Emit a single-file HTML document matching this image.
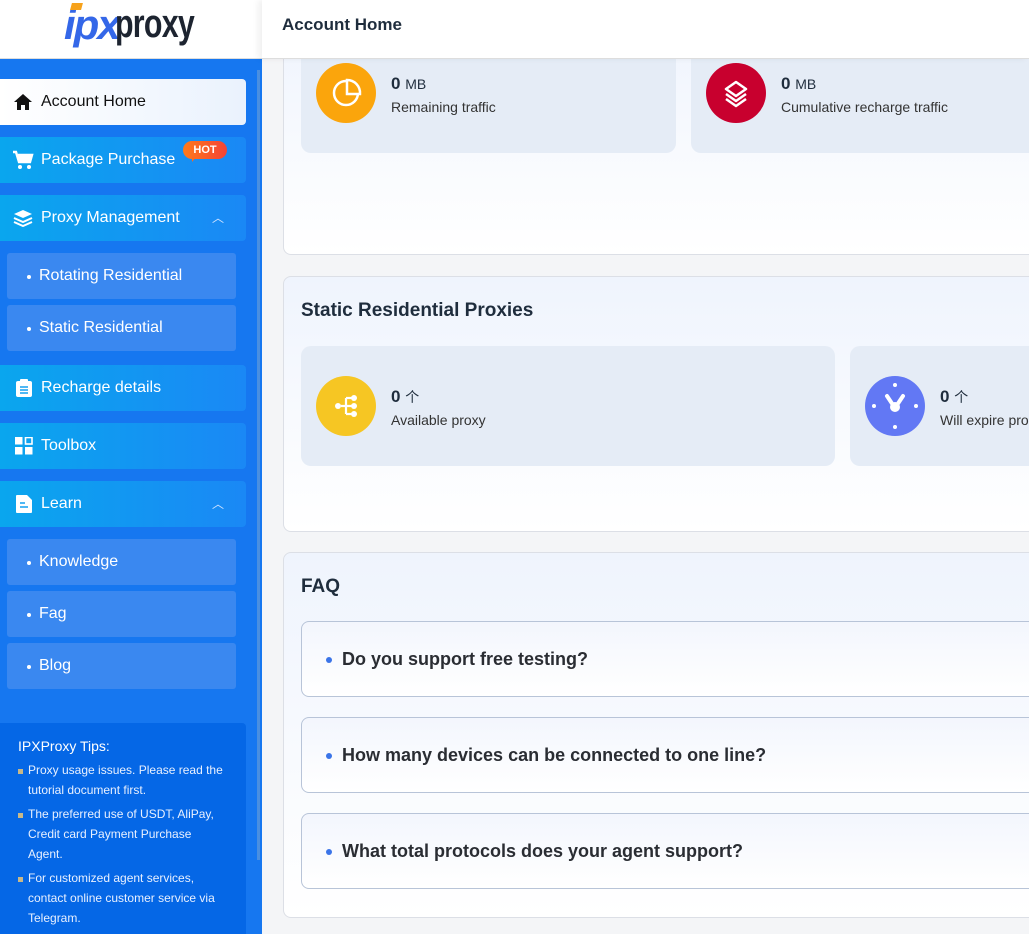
<!DOCTYPE html>
<html><head><meta charset="utf-8"><style>
*{box-sizing:border-box;margin:0;padding:0}
body{width:1029px;height:934px;overflow:hidden;background:#f4f5f7;font-family:"Liberation Sans",Arial,sans-serif;position:relative}
.abs{position:absolute}
#logo{left:0;top:0;width:262px;height:59px;background:#fff;border-bottom:1px solid #ddd;overflow:hidden}
#side{left:0;top:59px;width:262px;height:875px;background:#1677f0}
#sb{left:257px;top:70px;width:3px;height:790px;background:#4a8fe0}
.mi{position:absolute;left:0;width:246px;height:46px;border-radius:0 4px 4px 0;background:linear-gradient(90deg,#0aa6ee,#1a88f5);color:#fff;font-size:16px;line-height:46px;padding-left:41px}
.mi svg{position:absolute;left:13px;top:14px}
.sub{position:absolute;left:7px;width:229px;height:46px;border-radius:3px;background:#3a88f0;color:#fff;font-size:16px;line-height:46px;padding-left:20px}
.sub:before{content:"";position:absolute;left:20px;top:22px;width:4px;height:4px;border-radius:50%;background:#fff}
.sub span{margin-left:12px}
.car{position:absolute;right:22px;top:0;font-size:12px;color:#cfe3ff}
.card{position:absolute;left:283px;width:760px;border:1px solid #dcdfe6;border-radius:8px;background:linear-gradient(180deg,#eff4fd,#fff)}
.stat{position:absolute;background:#e5ecf6;border-radius:10px}
.ic{position:absolute;width:60px;height:60px;border-radius:50%}
.num{position:absolute;font-size:17px;font-weight:bold;color:#1f2d3d}
.num small{font-size:14px;font-weight:normal}
.lab{position:absolute;font-size:14px;color:#333;white-space:nowrap}
.ttl{position:absolute;left:17px;font-size:19px;font-weight:bold;color:#1f2d3d}
.faq{position:absolute;left:301px;width:740px;height:76px;border:1px solid #b8c4d8;border-radius:8px;background:linear-gradient(180deg,#f3f6fd,#fff)}
.faq span{position:absolute;left:40px;top:27px;font-size:18px;font-weight:bold;color:#2a2d33}
.faq:before{content:"";position:absolute;left:24px;top:35px;width:6px;height:6px;border-radius:50%;background:#3a74e8}
.tip{position:absolute;left:28px;white-space:nowrap}
</style></head><body>
<div id="logo" class="abs">
<div class="abs" style="left:64px;top:4px;font-size:42px;font-weight:bold;font-style:italic;color:#3467e8;letter-spacing:-2px;line-height:42px">ipx</div>
<div class="abs" style="left:71px;top:3px;width:11px;height:7px;background:#f7a21b;transform:skewX(-15deg)"></div>
<div class="abs" style="left:115px;top:3px;font-size:40px;font-weight:bold;color:#1d2430;letter-spacing:-1px;line-height:42px;transform:scaleX(.76);transform-origin:left">proxy</div>
</div>
<div id="side" class="abs"></div>
<div id="sb" class="abs"></div>

<div class="mi" style="top:79px;background:linear-gradient(90deg,#fff,#eaf2fd);color:#111"><svg width="20" height="18" viewBox="0 0 20 18"><path d="M10 1L1 9h3v8h4v-5h4v5h4V9h3z" fill="#111"/></svg>Account Home</div>
<div class="mi" style="top:137px"><svg width="22" height="20" viewBox="0 0 22 20" style="top:13px;left:12px"><path d="M1 2h3l3 10h11l2-7H6" stroke="#fff" stroke-width="2.4" fill="#fff"/><circle cx="8" cy="17" r="2" fill="#fff"/><circle cx="17" cy="17" r="2" fill="#fff"/></svg>Package Purchase
<div class="abs" style="left:183px;top:4px;width:44px;height:18px;border-radius:9px;background:linear-gradient(90deg,#ff7a1a,#f44336);color:#fff;font-size:11px;font-weight:bold;line-height:18px;text-align:center">HOT</div>
<div class="abs" style="left:192px;top:20px;width:0;height:0;border-left:4px solid #ff6a1a;border-bottom:5px solid transparent"></div></div>
<div class="mi" style="top:195px"><svg width="20" height="18" viewBox="0 0 20 18"><path d="M10 1L1 5l9 4 9-4z" fill="#fff"/><path d="M1 9l9 4 9-4M1 13l9 4 9-4" stroke="#fff" stroke-width="2" fill="none"/></svg>Proxy Management<span class="car">︿</span></div>
<div class="sub" style="top:253px"><span>Rotating Residential</span></div>
<div class="sub" style="top:305px"><span>Static Residential</span></div>
<div class="mi" style="top:365px"><svg width="18" height="20" viewBox="0 0 18 20" style="top:13px;left:15px"><rect x="1" y="3" width="16" height="16" rx="2" fill="#fff"/><rect x="5" y="1" width="8" height="4" rx="1" fill="#fff"/><path d="M5 9h8M5 12h8M5 15h8" stroke="#15a0f0" stroke-width="1.5"/></svg>Recharge details</div>
<div class="mi" style="top:423px"><svg width="18" height="18" viewBox="0 0 18 18" style="left:15px"><rect x="0" y="0" width="7.5" height="7.5" fill="#fff"/><rect x="10.5" y="0.5" width="6.5" height="6.5" stroke="#fff" stroke-width="1.6" fill="none"/><rect x="0" y="10" width="7.5" height="7.5" fill="#fff"/><rect x="10" y="10" width="7.5" height="7.5" fill="#fff"/></svg>Toolbox</div>
<div class="mi" style="top:481px"><svg width="18" height="20" viewBox="0 0 18 20" style="left:15px;top:13px"><path d="M1 2a1 1 0 0 1 1-1h10l5 5v12a1 1 0 0 1-1 1H2a1 1 0 0 1-1-1z" fill="#fff"/><path d="M5 9h5M5 13h8" stroke="#15a0f0" stroke-width="1.6"/></svg>Learn<span class="car">︿</span></div>
<div class="sub" style="top:539px"><span>Knowledge</span></div>
<div class="sub" style="top:591px"><span>Fag</span></div>
<div class="sub" style="top:643px"><span>Blog</span></div>

<div class="abs" style="left:0;top:723px;width:246px;height:211px;background:#0567e6;border-radius:0 4px 0 0;color:#e8f0ff;font-size:12px;line-height:20px">
<div class="abs" style="left:18px;top:13px;font-size:14px;color:#fff">IPXProxy Tips:</div>
<div class="tip" style="top:37px">Proxy usage issues. Please read the<br>tutorial document first.</div>
<div class="tip" style="top:81px">The preferred use of USDT, AliPay,<br>Credit card Payment Purchase<br>Agent.</div>
<div class="tip" style="top:145px">For customized agent services,<br>contact online customer service via<br>Telegram.</div>
<div class="abs" style="left:18px;top:46px;width:5px;height:5px;background:#c8b888"></div>
<div class="abs" style="left:18px;top:90px;width:5px;height:5px;background:#c8b888"></div>
<div class="abs" style="left:18px;top:154px;width:5px;height:5px;background:#c8b888"></div>
</div>

<div class="card" style="top:20px;height:235px"></div>
<div class="stat" style="left:301px;top:40px;width:375px;height:113px"></div>
<div class="stat" style="left:691px;top:40px;width:360px;height:113px"></div>
<div class="abs" style="left:262px;top:0;width:767px;height:59px;background:#fff;border-bottom:1px solid #ddd;box-shadow:-4px 0 6px rgba(0,0,0,.06)"><span style="position:absolute;left:20px;top:15px;font-size:17px;font-weight:bold;color:#1f2d3d">Account Home</span></div>
<div class="ic" style="left:316px;top:63px;background:#fba50c"><svg width="60" height="60" viewBox="0 0 60 60"><path d="M30 18a12 12 0 1 0 12 12" stroke="#fff" stroke-width="2.5" fill="none"/><path d="M31 17v14h13a13 13 0 0 0-13-14z" stroke="#fff" stroke-width="2.5" fill="none"/></svg></div>
<div class="num" style="left:391px;top:74px">0 <small>MB</small></div>
<div class="lab" style="left:391px;top:99px">Remaining traffic</div>
<div class="ic" style="left:706px;top:63px;background:#c8002e"><svg width="60" height="60" viewBox="0 0 60 60"><path d="M30 19l-10 7 10 7 10-7z M20 31l10 7 10-7 M20 36l10 7 10-7" stroke="#fff" stroke-width="2.5" fill="none" stroke-linejoin="round"/></svg></div>
<div class="num" style="left:781px;top:74px">0 <small>MB</small></div>
<div class="lab" style="left:781px;top:99px">Cumulative recharge traffic</div>

<div class="card" style="top:276px;height:256px"><div class="ttl" style="top:23px">Static Residential Proxies</div></div>
<div class="stat" style="left:301px;top:346px;width:534px;height:120px"></div>
<div class="stat" style="left:850px;top:346px;width:200px;height:120px"></div>
<div class="ic" style="left:316px;top:376px;background:#f6c623"><svg width="60" height="60" viewBox="0 0 60 60"><circle cx="22" cy="30" r="3" fill="#fff"/><path d="M25 30h5M30 22v16M30 22h6M30 30h6M30 38h6" stroke="#fff" stroke-width="2.2" fill="none"/><circle cx="38" cy="22" r="3" fill="#fff"/><circle cx="38" cy="30" r="3" fill="#fff"/><circle cx="38" cy="38" r="3" fill="#fff"/></svg></div>
<div class="num" style="left:391px;top:387px">0 <small>个</small></div>
<div class="lab" style="left:391px;top:412px">Available proxy</div>
<div class="ic" style="left:865px;top:376px;background:#6278f4"><svg width="60" height="60" viewBox="0 0 60 60"><path d="M22 20l8 12 8-12" stroke="#fff" stroke-width="4" fill="none" stroke-linecap="round"/><circle cx="30" cy="31" r="5" fill="#fff"/><circle cx="30" cy="9" r="2" fill="#fff"/><circle cx="30" cy="51" r="2" fill="#fff"/><circle cx="9" cy="30" r="2" fill="#fff"/><circle cx="51" cy="30" r="2" fill="#fff"/></svg></div>
<div class="num" style="left:940px;top:387px">0 <small>个</small></div>
<div class="lab" style="left:940px;top:412px">Will expire proxy</div>

<div class="card" style="top:552px;height:366px"><div class="ttl" style="top:23px">FAQ</div></div>
<div class="faq" style="top:621px"><span>Do you support free testing?</span></div>
<div class="faq" style="top:717px"><span>How many devices can be connected to one line?</span></div>
<div class="faq" style="top:813px"><span>What total protocols does your agent support?</span></div>
</body></html>
